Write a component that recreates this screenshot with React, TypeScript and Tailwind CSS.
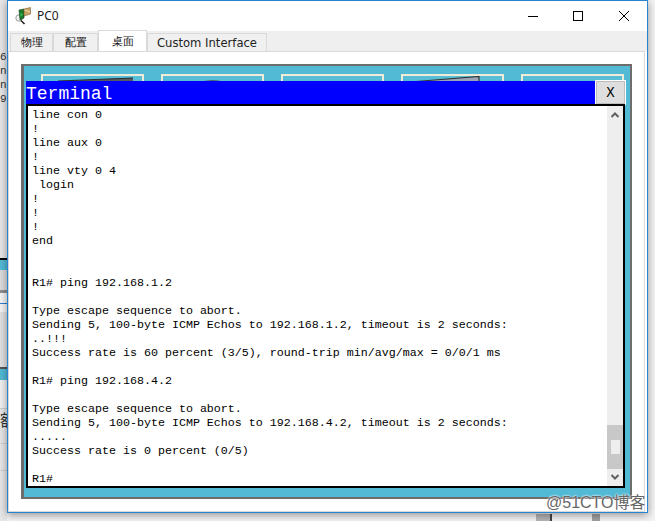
import React from "react";

const lines = [
  "line con 0", "!", "line aux 0", "!", "line vty 0 4", " login", "!", "!", "!", "end", "", "", "R1# ping 192.168.1.2", "",
  "Type escape sequence to abort.", "Sending 5, 100-byte ICMP Echos to 192.168.1.2, timeout is 2 seconds:", "..!!!",
  "Success rate is 60 percent (3/5), round-trip min/avg/max = 0/0/1 ms", "", "R1# ping 192.168.4.2", "",
  "Type escape sequence to abort.", "Sending 5, 100-byte ICMP Echos to 192.168.4.2, timeout is 2 seconds:", ".....",
  "Success rate is 0 percent (0/5)", "", "R1#",
];

function AppIcon() {
  return (
    <svg width="16" height="18" viewBox="0 0 16 18" className="shrink-0">
      <circle cx="4" cy="11" r="3.2" fill="#f4f4f4" stroke="#9a9a9a" strokeWidth="1" />
      <path d="M6 13.5 L9.5 17" stroke="#222" strokeWidth="1.6" />
      <path d="M4 3 L9 2 V11 L5 13 Z" fill="#1c7a2c" stroke="#0d3d16" strokeWidth="0.6" />
      <path d="M5.5 6 L8 7.5 L5.5 9.5 Z" fill="#33c24c" />
      <path d="M9 2 L15.5 0.5 V7 L9 9 Z" fill="#c9a468" stroke="#7b5c2c" strokeWidth="0.6" />
      <path d="M9.5 3 L15 5" stroke="#f0dcae" strokeWidth="1" />
    </svg>
  );
}

function Peek({ kind }: { kind: number }) {
  return (
    <svg width="99" height="7" viewBox="0 0 99 7" className="block">
      {kind === 0 && <path d="M15 5 L90 2 V7 H15 Z" fill="#55585c" />}
      {kind === 0 && <path d="M15 5 L90 2" stroke="#2b2b2b" strokeWidth="1" />}
      {kind === 1 && <path d="M32 7 Q45 3 58 5 V7 Z" fill="#3c3f44" />}
      {kind === 2 && <path d="M72 7 Q78 5 84 7 Z" fill="#6f8b96" />}
      {kind === 3 && <path d="M13 5.5 L76 0.5 V7 H13 Z" fill="#9ba3b4" />}
      {kind === 3 && <path d="M13 5.5 L76 0.5 V7" stroke="#333" strokeWidth="1.2" fill="none" />}
      {kind === 4 && <path d="M40 7 Q50 3 60 7 Z" fill="#6f8b96" />}
    </svg>
  );
}

function Tab({ label, active, w }: { label: string; active?: boolean; w: string }) {
  return (
    <div
      className={`${w} flex items-center justify-center border border-b-0 text-[11px] text-[#111] ${
        active
          ? "h-[21px] bg-white border-[#d9d9d9] relative z-10"
          : "h-[18px] bg-[#f0f0f0] border-[#d9d9d9]"
      }`}
    >
      {label}
    </div>
  );
}

export default function App() {
  return (
    <div className="relative flex h-[521px] w-[655px] overflow-hidden bg-[#f3f3f3] font-['Noto_Sans','Liberation_Sans',sans-serif]">
      {/* what is behind the window, on the left */}
      <div className="flex h-full w-[7px] shrink-0 flex-col overflow-hidden bg-[#e6e6e6] font-['Liberation_Mono',monospace] text-[11px] leading-[14px] text-[#333]">
        <div className="h-[50px]" />
        <div className="whitespace-nowrap">6</div>
        <div className="whitespace-nowrap">ne</div>
        <div className="whitespace-nowrap">ne</div>
        <div className="whitespace-nowrap">9</div>
        <div className="h-[152px]" />
        <div className="h-[2px] bg-black" />
        <div className="h-[10px] bg-[#52bad5]" />
        <div className="h-[20px] bg-[#dcdcdc]" />
        <div className="h-[3px] bg-[#8d8d8d]" />
        <div className="h-[10px] bg-[#f4f4f4]" />
        <div className="h-px bg-[#2a7fd0]" />
        <div className="h-[8px] bg-[#f4f4f4]" />
        <div className="h-[55px] bg-[#e0e0e0]" />
        <div className="h-[2px] bg-[#555]" />
        <div className="h-[11px] bg-[#52bad5]" />
        <div className="h-[29px] bg-[#f0f0f0] border-b border-[#cfcfcf]" />
        <div className="whitespace-nowrap text-[16px] leading-[20px] font-['Noto_Sans_CJK_SC',sans-serif]">额</div>
        <div className="h-[15px] border-b border-[#cfcfcf]" />
        <div className="h-[27px] border-b border-[#cfcfcf]" />
      </div>

      <div className="relative z-10 flex h-[513px] w-[641px] shrink-0 flex-col border border-[#2a82d2] bg-white shadow-[0_2px_8px_rgba(0,0,0,0.4)]">
        <div className="flex h-[30px] shrink-0 items-center bg-white pl-[7px]">
          <AppIcon />
          <span className="ml-[6px] text-[12px] text-[#222]">PC0</span>
          <div className="ml-auto flex items-center">
            <svg width="12" height="12" viewBox="0 0 12 12" className="mr-[33px] text-black">
              <path d="M1 6.5H11" stroke="currentColor" strokeWidth="1" />
            </svg>
            <svg width="12" height="12" viewBox="0 0 12 12" className="mr-[34px] text-black">
              <rect x="1.5" y="1.5" width="9" height="9" fill="none" stroke="currentColor" strokeWidth="1" />
            </svg>
            <svg width="12" height="12" viewBox="0 0 12 12" className="mr-[17px] text-black">
              <path d="M1 1L11 11M11 1L1 11" stroke="currentColor" strokeWidth="1" />
            </svg>
          </div>
        </div>

        <div className="flex h-[20px] shrink-0 items-end bg-[#efefef] pl-[2px]">
          <Tab label="物理" w="w-[43px]" />
          <Tab label="配置" w="w-[45px]" />
          <Tab label="桌面" w="w-[49px]" active />
          <div className="flex h-[18px] w-[120px] items-center justify-center border border-b-0 border-[#d9d9d9] bg-[#f0f0f0] pt-[3px] font-['DejaVu_Sans',sans-serif] text-[11.6px] text-[#222]">
            Custom Interface
          </div>
        </div>

        <div className="mr-[2px] min-h-0 flex-1 border border-[#d9d9d9] bg-white pl-[12px] pr-[12px] pt-[12px]">
          <div className="relative h-[435px] w-[611px] border-y-2 border-l-[3px] border-r-2 border-[#6d6d6d] bg-[#52bad5]">
            <div className="flex gap-[17px] overflow-hidden pl-[17px] pt-[8px]">
              {[0, 1, 2, 3, 4].map((k) => (
                <div key={k} className="h-[60px] w-[103px] shrink-0 border-2 border-[#eeebd8] bg-[#57bed6]">
                  <Peek kind={k} />
                </div>
              ))}
            </div>

            {/* terminal dialog over the desktop */}
            <div className="absolute left-[2px] top-[15px] flex h-[407px] w-[599px] flex-col">
              <div className="flex h-[23px] shrink-0">
                <div className="flex h-full w-[569px] items-center bg-[#0000ff] pt-[3px] font-['Liberation_Mono',monospace] text-[18px] text-white">
                  Terminal
                </div>
                <div className="ml-px flex h-full w-[29px] items-center justify-center border border-[#bdbdbd] bg-[#dedede] pt-[2px] font-['Liberation_Mono',monospace] text-[14px] text-black outline outline-1 outline-white">
                  X
                </div>
              </div>
              <div className="flex min-h-0 flex-1 border-2 border-black bg-white">
                <pre className="m-0 min-w-0 flex-1 pl-[4px] pt-[2px] font-['Liberation_Mono',monospace] text-[11.67px] leading-[14px] text-black">
                  {lines.map((l, i) => (
                    <div key={i} className="h-[14px]">{l}</div>
                  ))}
                </pre>
                <div className="flex w-[16px] shrink-0 flex-col items-center bg-[#eeeeee]">
                  <svg width="10" height="8" viewBox="0 0 10 8" className="mt-[5px] shrink-0">
                    <path d="M1.5 6L5 2.5L8.5 6" fill="none" stroke="#606060" strokeWidth="2" />
                  </svg>
                  <div className="mt-auto flex h-[44px] w-full items-center justify-center bg-[#c8c8c8]">
                    <div className="h-[14px] w-[9px] bg-[#eeeeee]" />
                  </div>
                  <svg width="10" height="8" viewBox="0 0 10 8" className="mb-[5px] mt-[4px] shrink-0">
                    <path d="M1.5 2L5 5.5L8.5 2" fill="none" stroke="#606060" strokeWidth="2" />
                  </svg>
                </div>
              </div>
            </div>
          </div>
        </div>
      </div>

      {/* what is behind the window, on the right and below */}
      <div className="h-[513px] flex-1 bg-[#f3f3f3]" />
      <div className="absolute bottom-0 left-[536px] flex h-[7px]">
        <div className="h-full w-[14px] bg-[#b4b4b4]" />
        <div className="h-full w-[2px] bg-[#444]" />
        <div className="ml-[40px] h-full w-[8px] bg-[#a0a0a0]" />
      </div>

      <div className="absolute left-[546px] top-[492px] z-20 whitespace-nowrap font-['Liberation_Sans','Noto_Sans_CJK_SC',sans-serif] text-[16px] leading-[22px] text-[#666] [text-shadow:0_0_2px_#fff,0_0_2px_#fff]">
        @51CTO博客
      </div>
    </div>
  );
}
